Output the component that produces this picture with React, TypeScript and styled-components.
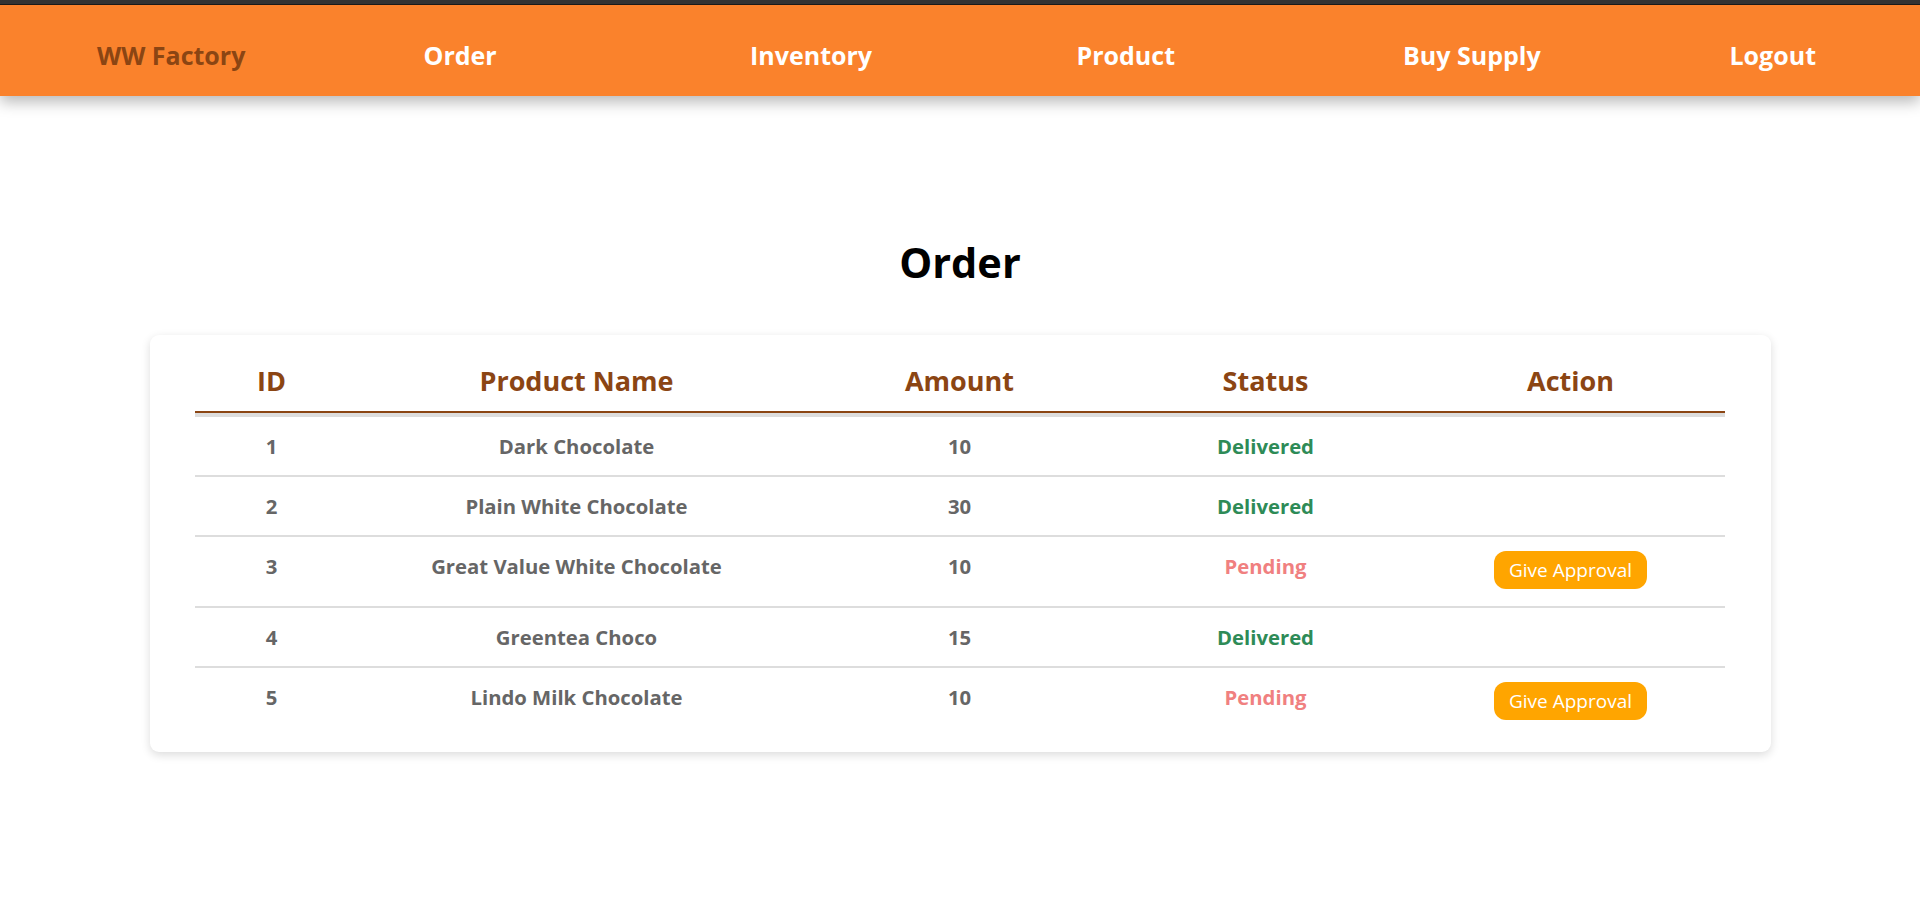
import React from "react";
import styled, { createGlobalStyle } from "styled-components";

const GlobalStyle = createGlobalStyle`
  html, body {
    margin: 0;
    padding: 0;
    background: #ffffff;
    font-family: "Open Sans", "Noto Sans", sans-serif;
  }
  * { box-sizing: border-box; }
`;

const Page = styled.div`
  min-height: 913px;
  border-top: 4px solid #333333;
  overflow: hidden;
`;

const NavBar = styled.nav`
  height: 92px;
  background: #fa822c;
  border-top: 1px solid #1a1a1a;
  box-shadow: 0 6px 14px rgba(0, 0, 0, 0.28);
  display: grid;
  grid-template-columns: repeat(5, 326.5px) auto;
  align-items: center;
  padding-left: 97px;
  position: relative;
  z-index: 1;
`;

const NavItem = styled.a<{ $brand?: boolean }>`
  font-size: 25px;
  font-weight: 700;
  color: ${(p) => (p.$brand ? "#8b4513" : "#ffffff")};
  text-decoration: none;
  line-height: 32px;
  padding-top: 8px;
  white-space: nowrap;
`;

const Main = styled.main`
  display: flex;
  flex-direction: column;
  align-items: center;
  padding-top: 138px;
`;

const Title = styled.h1`
  margin: 0 0 45px;
  font-size: 41.5px;
  font-weight: 700;
  line-height: 56px;
  color: #000000;
`;

const Card = styled.section`
  width: 1621px;
  background: #ffffff;
  border-radius: 9px;
  box-shadow: 0 3px 10px rgba(0, 0, 0, 0.14);
  padding: 18px 45px 15px;
`;

const Table = styled.table`
  width: 1530px;
  border-collapse: separate;
  border-spacing: 0;
  table-layout: fixed;
`;

const HeadCell = styled.th`
  font-size: 27px;
  font-weight: 700;
  color: #8b4513;
  line-height: 32px;
  padding: 12px 0 14px;
  border-bottom: 2px solid #8b4513;
  text-align: center;
`;

const Cell = styled.td<{ $first?: boolean }>`
  font-size: 20.3px;
  font-weight: 700;
  color: #666666;
  line-height: 28px;
  padding: 15px 0;
  text-align: center;
  vertical-align: top;
  border-top: ${(p) => (p.$first ? "4px" : "2px")} solid #dddddd;
`;

const Status = styled.span<{ $pending?: boolean }>`
  color: ${(p) => (p.$pending ? "#f08080" : "#2e8b57")};
`;

const ApproveButton = styled.button`
  font-family: "Open Sans", "Noto Sans", sans-serif;
  font-size: 19px;
  font-weight: 400;
  color: #ffffff;
  background: #ffa500;
  border: none;
  border-radius: 12px;
  padding: 6px 15px;
  line-height: 26px;
  cursor: pointer;
  margin: -1px 0 2px;
  vertical-align: top;
`;

type Order = { id: number; name: string; amount: number; status: "Delivered" | "Pending" };

const orders: Order[] = [
  { id: 1, name: "Dark Chocolate", amount: 10, status: "Delivered" },
  { id: 2, name: "Plain White Chocolate", amount: 30, status: "Delivered" },
  { id: 3, name: "Great Value White Chocolate", amount: 10, status: "Pending" },
  { id: 4, name: "Greentea Choco", amount: 15, status: "Delivered" },
  { id: 5, name: "Lindo Milk Chocolate", amount: 10, status: "Pending" },
];

const colWidths = [154, 456, 310, 302, 308];

export default function App() {
  return (
    <>
      <GlobalStyle />
      <Page>
        <NavBar>
          <NavItem $brand>WW Factory</NavItem>
          <NavItem>Order</NavItem>
          <NavItem>Inventory</NavItem>
          <NavItem>Product</NavItem>
          <NavItem>Buy Supply</NavItem>
          <NavItem>Logout</NavItem>
        </NavBar>
        <Main>
          <Title>Order</Title>
          <Card>
            <Table>
              <colgroup>
                {colWidths.map((w, i) => (
                  <col key={i} style={{ width: w }} />
                ))}
              </colgroup>
              <thead>
                <tr>
                  <HeadCell>ID</HeadCell>
                  <HeadCell>Product Name</HeadCell>
                  <HeadCell>Amount</HeadCell>
                  <HeadCell>Status</HeadCell>
                  <HeadCell>Action</HeadCell>
                </tr>
              </thead>
              <tbody>
                {orders.map((o, i) => {
                  const first = i === 0;
                  return (
                    <tr key={o.id}>
                      <Cell $first={first}>{o.id}</Cell>
                      <Cell $first={first}>{o.name}</Cell>
                      <Cell $first={first}>{o.amount}</Cell>
                      <Cell $first={first}>
                        <Status $pending={o.status === "Pending"}>{o.status}</Status>
                      </Cell>
                      <Cell $first={first}>
                        {o.status === "Pending" && <ApproveButton>Give Approval</ApproveButton>}
                      </Cell>
                    </tr>
                  );
                })}
              </tbody>
            </Table>
          </Card>
        </Main>
      </Page>
    </>
  );
}
